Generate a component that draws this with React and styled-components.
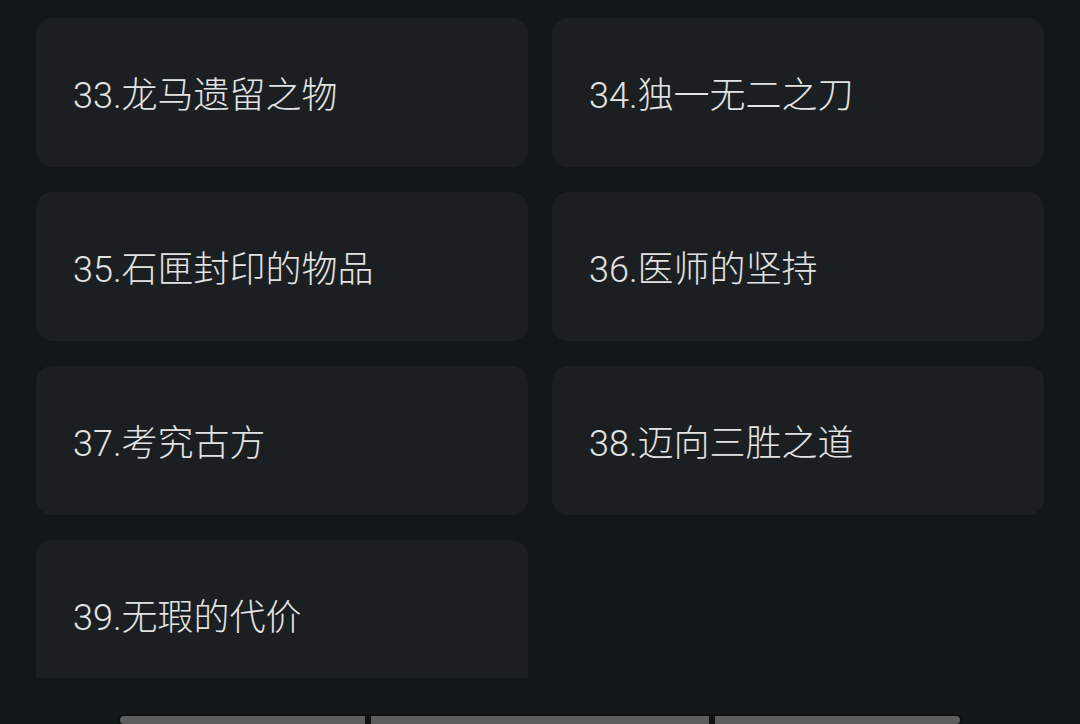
import React from "react";
import styled, { createGlobalStyle } from "styled-components";

const GlobalStyle = createGlobalStyle`
  html, body {
    margin: 0;
    padding: 0;
    background: #121718;
  }
  body {
    font-family: Roboto, "Noto Sans CJK SC", sans-serif;
    overflow: hidden;
  }
`;

const Page = styled.div`
  display: flex;
  flex-direction: column;
  width: 1080px;
  height: 724px;
  background: #121718;
`;

const Scroller = styled.div`
  height: 678px;
  overflow: hidden;
  padding: 18px 36px 0;
  box-sizing: border-box;
`;

const Grid = styled.div`
  display: grid;
  grid-template-columns: 1fr 1fr;
  column-gap: 24px;
  row-gap: 25px;
`;

const Card = styled.div`
  display: flex;
  align-items: center;
  height: 149px;
  padding: 0 0 2px 37px;
  box-sizing: border-box;
  background: #1b1f21;
  border-radius: 16px;
  color: #e3e3e3;
  font-size: 36px;
  font-weight: 300;
  font-family: Roboto, "Noto Sans CJK SC", sans-serif;
  white-space: nowrap;
`;

const Footer = styled.div`
  flex: 1;
  display: flex;
  align-items: flex-end;
  justify-content: flex-start;
  padding: 0 0 0 118px;
`;

const Track = styled.div`
  display: flex;
  gap: 6px;
  padding: 2px 2px 0;
  background: #0e1213;
  border-radius: 6px 6px 0 0;
`;

const Segment = styled.div`
  width: ${(p) => p.w}px;
  height: 8px;
  background: #5d5e5e;
  border-radius: ${(p) =>
    p.first ? "4px 0 0 4px" : p.last ? "0 4px 4px 0" : "0"};
`;

const items = [
  "33.龙马遗留之物",
  "34.独一无二之刀",
  "35.石匣封印的物品",
  "36.医师的坚持",
  "37.考究古方",
  "38.迈向三胜之道",
  "39.无瑕的代价",
];

export default function App() {
  return (
    <>
      <GlobalStyle />
      <Page>
        <Scroller>
          <Grid>
            {items.map((t) => (
              <Card key={t}>{t}</Card>
            ))}
          </Grid>
        </Scroller>
        <Footer>
          <Track>
            <Segment w={245} first />
            <Segment w={338} />
            <Segment w={245} last />
          </Track>
        </Footer>
      </Page>
    </>
  );
}
